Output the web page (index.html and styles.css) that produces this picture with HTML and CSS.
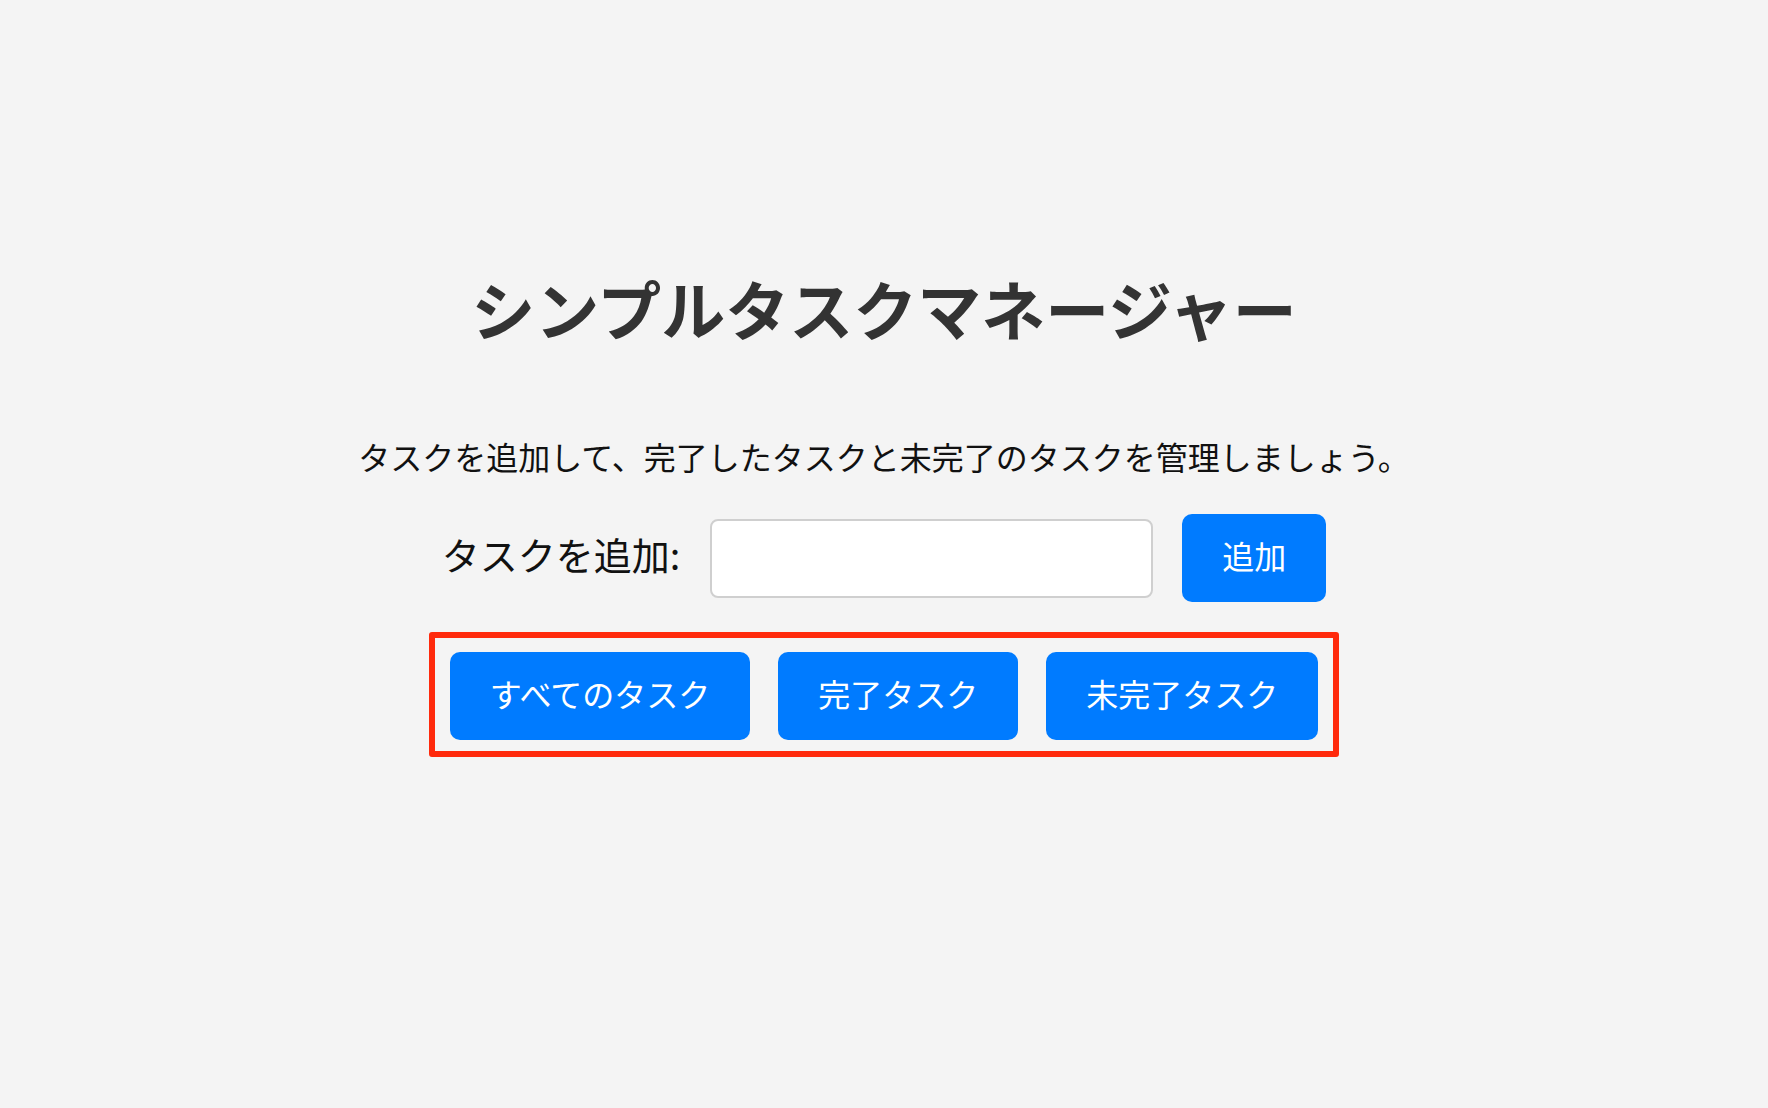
FILE: index.html
```html
<!DOCTYPE html>
<html lang="ja">
<head>
<meta charset="utf-8">
<title>シンプルタスクマネージャー</title>
<link rel="stylesheet" href="styles.css">
</head>
<body>
<main class="app">
  <h1 class="title">シンプルタスクマネージャー</h1>
  <p class="lead">タスクを追加して、完了したタスクと未完了のタスクを管理しましょう。</p>
  <form class="add-row">
    <label class="add-label" for="task">タスクを追加:</label>
    <input class="add-input" id="task" type="text">
    <button class="btn btn-add" type="button">追加</button>
  </form>
  <div class="filters">
    <button class="btn btn-filter" type="button">すべてのタスク</button>
    <button class="btn btn-filter" type="button">完了タスク</button>
    <button class="btn btn-filter" type="button">未完了タスク</button>
  </div>
</main>
</body>
</html>
```
FILE: styles.css
```css
html, body {
  margin: 0;
  padding: 0;
}
body {
  background: #f4f4f4;
  font-family: "Noto Sans CJK JP", "Noto Sans", sans-serif;
  color: #111;
}
.app {
  display: flex;
  flex-direction: column;
  align-items: center;
  padding-top: 275px;
}
.title {
  margin: 0;
  font-size: 64px;
  line-height: 64px;
  font-weight: 700;
  color: #333;
}
.lead {
  margin: 101px 0 0;
  font-size: 32px;
  line-height: 32px;
  color: #111;
}
.add-row {
  display: flex;
  align-items: center;
  margin: 42px 0 0;
}
.add-label {
  font-size: 38px;
  line-height: 40px;
  padding-bottom: 9px;
  color: #111;
  margin-right: 30px;
}
.add-input {
  box-sizing: border-box;
  width: 443px;
  height: 79px;
  border: 2px solid #cfcfcf;
  border-radius: 8px;
  background: #fff;
  margin-right: 29px;
  padding: 0 16px;
  font-size: 32px;
}
.btn {
  box-sizing: border-box;
  height: 88px;
  padding: 0 40px 6px;
  border: none;
  border-radius: 10px;
  background: #007bff;
  color: #fff;
  font-family: "Noto Sans CJK JP", "Noto Sans", sans-serif;
  font-size: 32px;
  line-height: 82px;
}
.filters {
  display: flex;
  gap: 28px;
  margin-top: 30px;
  padding: 14px 15px 11px;
  border: 6px solid #ff2a0c;
  border-radius: 3px;
}
```
